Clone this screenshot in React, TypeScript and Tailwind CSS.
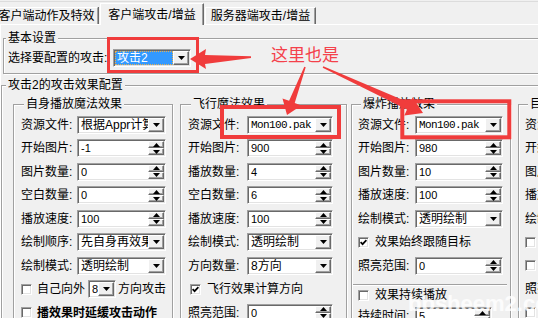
import React from "react";

const sunken =
  "border border-t-[#a0a0a0] border-l-[#a0a0a0] border-r-white border-b-white bg-white shadow-[inset_1px_1px_0_#696969,inset_-1px_-1px_0_#e3e3e3]";
const raised =
  "border border-t-white border-l-white border-r-[#696969] border-b-[#696969] bg-[#f0f0f0] shadow-[inset_-1px_-1px_0_#a0a0a0]";
const etched =
  "border border-[#a0a0a0] shadow-[inset_1px_1px_0_#ffffff,1px_1px_0_#ffffff]";

function Tri({ up = false }: { up?: boolean }) {
  return (
    <svg width="7" height="4" viewBox="0 0 7 4" className="block">
      <path d={up ? "M0 4L3.5 0L7 4Z" : "M0 0H7L3.5 4Z"} fill="#000" />
    </svg>
  );
}

function Combo({
  w,
  children,
  mono = false,
}: {
  w: string;
  children?: React.ReactNode;
  mono?: boolean;
}) {
  return (
    <div className={`flex h-[18px] shrink-0 p-[1px] ${sunken} ${w}`}>
      <div
        className={`flex min-w-0 flex-1 items-center overflow-hidden whitespace-nowrap pl-[2px] ${
          mono ? "font-['Liberation_Mono',monospace] text-[11px] tracking-[-0.6px]" : ""
        }`}
      >
        {children}
      </div>
      <div className={`flex w-[16px] shrink-0 items-center justify-center ${raised}`}>
        <Tri />
      </div>
    </div>
  );
}

function Spin({ w, value }: { w: string; value: string }) {
  return (
    <div className={`flex h-[18px] shrink-0 p-[1px] ${sunken} ${w}`}>
      <div className="flex min-w-0 flex-1 items-center pl-[2px] text-[11px]">{value}</div>
      <div className="flex w-[16px] shrink-0 flex-col">
        <div className={`flex flex-1 items-center justify-center ${raised}`}>
          <Tri up />
        </div>
        <div className={`flex flex-1 items-center justify-center ${raised}`}>
          <Tri />
        </div>
      </div>
    </div>
  );
}

function Check({ on = false }: { on?: boolean }) {
  return (
    <span className={`flex h-[11px] w-[11px] shrink-0 items-center justify-center ${sunken}`}>
      {on && (
        <svg width="7" height="7" viewBox="0 0 7 7" className="block">
          <path d="M0.6 3.2L2.6 5.2L6.4 1.2" fill="none" stroke="#000" strokeWidth="1.7" />
        </svg>
      )}
    </span>
  );
}

function Row({ label, lw, children }: { label: string; lw: string; children?: React.ReactNode }) {
  return (
    <div className="flex h-[23.5px] items-center whitespace-nowrap">
      <span className={`shrink-0 ${lw}`}>{label}</span>
      {children}
    </div>
  );
}

function CheckRow({
  on = false,
  children,
  cls = "h-[23.5px]",
}: {
  on?: boolean;
  children: React.ReactNode;
  cls?: string;
}) {
  return (
    <div className={`flex items-center whitespace-nowrap ${cls}`}>
      <Check on={on} />
      {children}
    </div>
  );
}

function Group({
  title,
  cls,
  children,
}: {
  title: string;
  cls: string;
  children: React.ReactNode;
}) {
  return (
    <fieldset className={`h-[240px] shrink-0 ${etched} ${cls}`}>
      <legend className="ml-[3px] whitespace-nowrap bg-[#f0f0f0] px-[2px] leading-[14px]">{title}</legend>
      {children}
    </fieldset>
  );
}

export default function App() {
  return (
    <div className="relative h-[318px] w-[538px] overflow-hidden bg-[#f0f0f0] font-['Liberation_Sans','Noto_Sans_CJK_SC',sans-serif] text-[12px] leading-[14px] text-black">
      <div className="h-[2px] border-b border-[#dcdcdc]" />
      {/* tabs */}
      <div className="flex h-[22px] items-end whitespace-nowrap">
        <div className="-ml-[4px] flex h-[17px] w-[102px] shrink-0 items-center justify-center border-t border-r border-t-white border-r-[#a0a0a0] shadow-[1px_0_0_#696969]">
          客户端动作及特效
        </div>
        <div className="relative z-10 -mb-[1px] ml-[2px] flex h-[22px] w-[104px] shrink-0 items-center justify-center border-t border-l border-r border-t-white border-l-white border-r-[#696969] bg-[#f0f0f0] shadow-[inset_-1px_0_0_#a0a0a0]">
          客户端攻击/增益
        </div>
        <div className="ml-[1px] flex h-[17px] w-[111px] shrink-0 items-center justify-center border-t border-l border-r border-t-white border-l-white border-r-[#696969] shadow-[inset_-1px_0_0_#a0a0a0]">
          服务器端攻击/增益
        </div>
      </div>

      {/* panel */}
      <div className="border-t border-l border-t-white border-l-white">
        <fieldset className={`ml-[2px] mt-[6px] w-[600px] ${etched}`}>
          <legend className="ml-[2px] whitespace-nowrap bg-[#f0f0f0] px-[2px] leading-[14px]">基本设置</legend>
          <div className="flex items-center whitespace-nowrap pb-[6px] pl-[4px] pt-[4px]">
            <span className="w-[105px] shrink-0">选择要配置的攻击:</span>
            <div className={`flex h-[18px] w-[78px] shrink-0 p-[1px] ${sunken}`}>
              <div className="flex min-w-0 flex-1 items-center border border-dotted border-[#e8b050] bg-[#3399ff] pl-[1px] text-white">
                攻击2
              </div>
              <div className={`flex w-[16px] shrink-0 items-center justify-center ${raised}`}>
                <Tri />
              </div>
            </div>
          </div>
        </fieldset>

        <fieldset className={`mt-[4px] h-[260px] w-[700px] ${etched}`}>
          <legend className="ml-[4px] whitespace-nowrap bg-[#f0f0f0] px-[2px] leading-[14px]">
            攻击2的攻击效果配置
          </legend>
          <div className="flex items-start pl-[11px] pt-[5px]">
            {/* col 1 */}
            <Group title="自身播放魔法效果" cls="w-[160px] pl-[7px] pt-[2px]">
              <Row label="资源文件:" lw="w-[56px]">
                <Combo w="w-[89px]">根据Appr计算</Combo>
              </Row>
              <Row label="开始图片:" lw="w-[56px]">
                <Spin w="w-[89px]" value="-1" />
              </Row>
              <Row label="图片数量:" lw="w-[56px]">
                <Spin w="w-[89px]" value="0" />
              </Row>
              <Row label="空白数量:" lw="w-[56px]">
                <Spin w="w-[89px]" value="0" />
              </Row>
              <Row label="播放速度:" lw="w-[56px]">
                <Spin w="w-[89px]" value="100" />
              </Row>
              <Row label="绘制顺序:" lw="w-[56px]">
                <Combo w="w-[89px]">先自身再效果</Combo>
              </Row>
              <Row label="绘制模式:" lw="w-[56px]">
                <Combo w="w-[89px]">透明绘制</Combo>
              </Row>
              <CheckRow>
                <span className="ml-[5px]">自己向外</span>
                <div className="ml-[3px]">
                  <Combo w="w-[28px]">
                    <span className="text-[11px]">8</span>
                  </Combo>
                </div>
                <span className="ml-[2px]">方向攻击</span>
              </CheckRow>
              <CheckRow>
                <span className="ml-[5px] font-bold">播效果时延缓攻击动作</span>
              </CheckRow>
            </Group>

            {/* col 2 */}
            <Group title="飞行魔法效果" cls="ml-[7px] w-[167px] pl-[7px] pt-[2px]">
              <Row label="资源文件:" lw="w-[59px]">
                <Combo w="w-[86px]" mono>
                  Mon100.pak
                </Combo>
              </Row>
              <Row label="开始图片:" lw="w-[59px]">
                <Spin w="w-[86px]" value="900" />
              </Row>
              <Row label="播放数量:" lw="w-[59px]">
                <Spin w="w-[86px]" value="4" />
              </Row>
              <Row label="空白数量:" lw="w-[59px]">
                <Spin w="w-[86px]" value="6" />
              </Row>
              <Row label="播放速度:" lw="w-[59px]">
                <Spin w="w-[86px]" value="100" />
              </Row>
              <Row label="绘制模式:" lw="w-[59px]">
                <Combo w="w-[86px]">透明绘制</Combo>
              </Row>
              <Row label="方向数量:" lw="w-[59px]">
                <Combo w="w-[86px]">8方向</Combo>
              </Row>
              <div className="pl-[2px]">
                <CheckRow on>
                  <span className="ml-[6px]">飞行效果计算方向</span>
                </CheckRow>
              </div>
              <Row label="照亮范围:" lw="w-[59px]">
                <Spin w="w-[86px]" value="0" />
              </Row>
            </Group>

            {/* col 3 */}
            <Group title="爆炸播放效果" cls="ml-[4px] w-[160px] pl-[6px] pt-[2px]">
              <Row label="资源文件:" lw="w-[57px]">
                <Combo w="w-[88px]" mono>
                  Mon100.pak
                </Combo>
              </Row>
              <Row label="开始图片:" lw="w-[57px]">
                <Spin w="w-[88px]" value="980" />
              </Row>
              <Row label="图片数量:" lw="w-[57px]">
                <Spin w="w-[88px]" value="10" />
              </Row>
              <Row label="播放速度:" lw="w-[57px]">
                <Spin w="w-[88px]" value="100" />
              </Row>
              <Row label="绘制模式:" lw="w-[57px]">
                <Combo w="w-[88px]">透明绘制</Combo>
              </Row>
              <CheckRow on>
                <span className="ml-[6px]">效果始终跟随目标</span>
              </CheckRow>
              <Row label="照亮范围:" lw="w-[57px]">
                <Spin w="w-[88px]" value="0" />
              </Row>
              <div className="-ml-[5px] mr-[3px] mt-[6px] h-[2px] border-t border-b border-t-[#a0a0a0] border-b-white" />
              <CheckRow cls="h-[19px]">
                <span className="ml-[6px]">效果持续播放</span>
              </CheckRow>
              <Row label="持续时间:" lw="w-[57px]">
                <Spin w="w-[77px]" value="5" />
              </Row>
            </Group>

            {/* col 4 */}
            <Group title="目标播放魔法效果" cls="ml-[7px] w-[160px] pl-[6px] pt-[2px]">
              <Row label="资源文件:" lw="w-[57px]" />
              <Row label="开始图片:" lw="w-[57px]" />
              <Row label="图片数量:" lw="w-[57px]" />
              <Row label="播放速度:" lw="w-[57px]" />
              <Row label="绘制模式:" lw="w-[57px]" />
              <CheckRow>
                <span className="ml-[6px]">效果始终跟随</span>
              </CheckRow>
              <CheckRow>
                <span className="ml-[6px]">效果持续播放</span>
              </CheckRow>
              <Row label="照亮范围:" lw="w-[57px]" />
              <CheckRow>
                <span className="ml-[6px]">其它</span>
              </CheckRow>
            </Group>
          </div>
        </fieldset>
      </div>

      {/* annotations */}
      <svg
        className="pointer-events-none absolute left-0 top-0"
        width="538"
        height="318"
        viewBox="0 0 538 318"
      >
        <rect x="108.5" y="38.5" width="89" height="33" fill="none" stroke="#f03c3c" strokeWidth="3" />
        <rect x="222" y="107" width="117" height="30" fill="none" stroke="#f03c3c" strokeWidth="4" />
        <rect x="402.3" y="101.3" width="107" height="36" fill="none" stroke="#f03c3c" strokeWidth="4" />
        <polygon points="190,59 206,49 205,55 251,56.3 251,58 205,64 206,69" fill="#f03c3c" />
        <polygon
          points="305.7,67.3 294.7,102.9 301.3,105.4 287,115 282.5,98.4 289.1,100.8 304.3,66.7"
          fill="#f03c3c"
        />
        <polygon
          points="323.3,66.3 410,103.1 412.7,97.2 423,113 404.3,115.4 407,109.5 322.7,67.7"
          fill="#f03c3c"
        />
      </svg>
      <div className="pointer-events-none absolute left-[271px] top-[44px] whitespace-nowrap font-['Noto_Sans_CJK_SC',sans-serif] text-[17px] leading-[20px] text-[#f4414b]">
        这里也是
      </div>
      <div className="pointer-events-none absolute left-[408px] top-[291px] whitespace-nowrap font-['Liberation_Sans',sans-serif] text-[22px] font-bold leading-[26px] text-white/80">
        bbsheem2.com
      </div>
    </div>
  );
}
